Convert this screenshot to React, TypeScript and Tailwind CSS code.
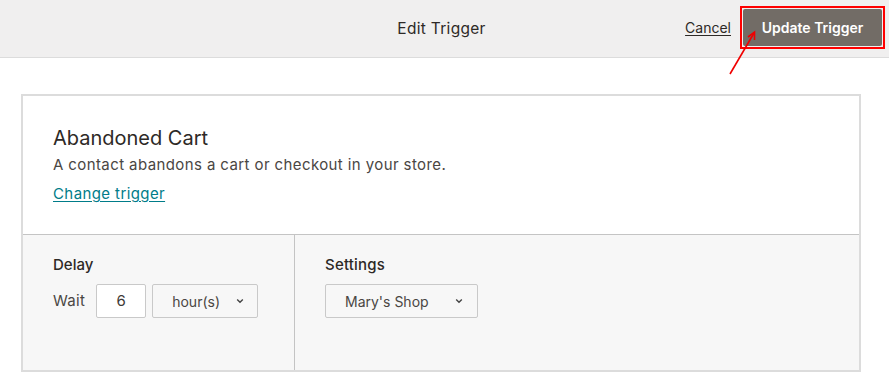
import React from "react";

function Chevron() {
  return (
    <svg width="8" height="6" viewBox="0 0 8 6" className="shrink-0">
      <path d="M1.2 1.5 L4 4.3 L6.8 1.5" fill="none" stroke="#444" strokeWidth="1.4" />
    </svg>
  );
}

function SelectBox({ label, width, gap }: { label: string; width: string; gap: string }) {
  return (
    <div
      className={`flex h-[34px] ${width} items-center rounded-[2px] border border-[#c9c9c9] bg-[#f7f7f7] pl-[19px] text-[14px] text-[#4a4643]`}
    >
      <span>{label}</span>
      <span className={gap}>
        <Chevron />
      </span>
    </div>
  );
}

export default function App() {
  return (
    <div className="relative h-[382px] w-[889px] overflow-hidden bg-white font-['Inter',sans-serif] text-[#241c15]">
      {/* header */}
      <div className="relative flex h-[58px] items-center justify-center border-b border-[#dcdcdc] bg-[#f0efef]">
        <h1 className="ml-[-6px] pt-[1px] text-[15.5px] tracking-[0.3px] text-[#2d2926]">Edit Trigger</h1>
        <div className="absolute right-[4px] top-[6px] flex items-center">
          <a href="#" className="mr-[9px] text-[14px] text-[#2d2926] underline underline-offset-2">
            Cancel
          </a>
          <div className="border-2 border-[#ff0000] p-px">
            <button className="flex h-[37px] w-[139px] items-center justify-center rounded-[2px] bg-[#726c66] text-[14px] font-semibold text-white">
              Update Trigger
            </button>
          </div>
        </div>
      </div>

      {/* annotation arrow */}
      <svg className="absolute left-[725px] top-[28px]" width="40" height="52" viewBox="0 0 40 52">
        <path d="M5 46 L29 5" stroke="#f00000" strokeWidth="1.6" fill="none" />
        <path d="M23 9 L29.5 4 L29.5 12" stroke="#f00000" strokeWidth="1.6" fill="none" />
      </svg>

      {/* card */}
      <div className="ml-[21px] mt-[36px] w-[840px] border-2 border-[#dcdcdc]">
        <div className="h-[139px] border-b border-[#c4c4c4] bg-white pl-[30px] pt-[29px]">
          <h2 className="text-[20px] leading-[26px] text-[#2d2926]">Abandoned Cart</h2>
          <p className="mt-[4px] text-[15px] leading-[20px] tracking-[0.4px] text-[#4a4643]">
            A contact abandons a cart or checkout in your store.
          </p>
          <a
            href="#"
            className="mt-[8px] inline-block text-[15px] tracking-[0.4px] text-[#007c89] underline underline-offset-2"
          >
            Change trigger
          </a>
        </div>
        <div className="flex h-[135px] bg-[#f7f7f7]">
          <div className="w-[272px] border-r border-[#c4c4c4] pl-[30px] pt-[20px]">
            <div className="text-[15px] font-medium leading-[20px] text-[#2d2926]">Delay</div>
            <div className="mt-[9px] flex items-center">
              <span className="mr-[11px] text-[15px] tracking-[0.3px] text-[#4a4643]">Wait</span>
              <div className="flex h-[34px] w-[50px] items-center justify-center rounded-[2px] border border-[#c9c9c9] bg-white text-[15px] text-[#3e3a36]">
                6
              </div>
              <div className="ml-[6px]">
                <SelectBox label="hour(s)" width="w-[106px]" gap="ml-[16px]" />
              </div>
            </div>
          </div>
          <div className="pl-[30px] pt-[20px]">
            <div className="text-[15px] font-medium leading-[20px] tracking-[0.2px] text-[#2d2926]">Settings</div>
            <div className="mt-[9px]">
              <SelectBox label="Mary's Shop" width="w-[153px]" gap="ml-[26px]" />
            </div>
          </div>
        </div>
      </div>
    </div>
  );
}
